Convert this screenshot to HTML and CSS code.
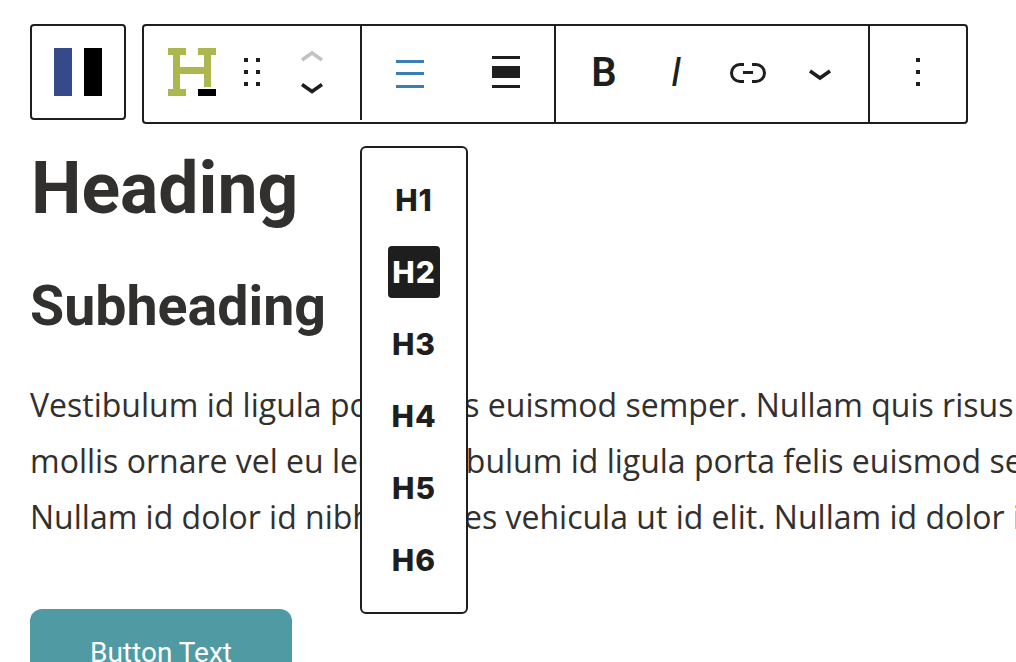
FILE: index.html
```html
<!DOCTYPE html>
<html lang="en">
<head>
<meta charset="utf-8">
<title>Heading block toolbar</title>
<link rel="stylesheet" href="styles.css">
</head>
<body>
<div class="toolbar-row">
  <div class="logo-box">
    <svg class="icon" viewBox="0 0 48 48"><rect x="0" y="0" width="18" height="48" fill="#364a89"/><rect x="30" y="0" width="18" height="48" fill="#000"/></svg>
  </div>
  <div class="toolbar">
    <div class="group group-first">
      <svg class="icon" viewBox="0 0 48 48"><path fill="#adb74f" d="M0 0h18v7h-6v12h24V7h-6V0h18v7h-5v32h-7V26H12v15h6v7H0v-7h5V7H0z"/><rect x="30" y="41" width="18" height="7" fill="#000"/></svg>
      <svg class="icon" viewBox="0 0 48 48"><path fill="#1e1e1e" d="M16 10h4v4h-4zM28 10h4v4h-4zM16 22h4v4h-4zM28 22h4v4h-4zM16 34h4v4h-4zM28 34h4v4h-4z"/></svg>
      <svg class="icon" viewBox="0 0 48 48"><path d="M14 12 24 5l10 7" fill="none" stroke="#c2c2c2" stroke-width="3.500"/><path d="M14 36.500 24 43.500l10-7" fill="none" stroke="#1e1e1e" stroke-width="3.500"/></svg>
    </div>
    <div class="group group-wide">
      <span class="slot"><svg class="icon" viewBox="0 0 48 48"><path fill="#3a7db8" d="M10 12h28v3H10zM10 24h28v3H10zM10 37h28v3H10z"/></svg></span>
      <span class="slot"><svg class="icon" viewBox="0 0 48 48"><path fill="#1e1e1e" d="M10 8h28v3H10zM10 18h28v12H10zM10 37h28v3H10z"/></svg></span>
    </div>
    <div class="group group-format">
      <span class="slot-sm glyph glyph-bold">B</span>
      <span class="slot-sm glyph glyph-italic">I</span>
      <span class="slot-sm"><svg class="icon" viewBox="0 0 48 48"><path d="M20 16.500h-4a8.500 8.500 0 0 0 0 17h4M28 16.500h4a8.500 8.500 0 0 1 0 17h-4M19 24.500h10" fill="none" stroke="#1e1e1e" stroke-width="3"/></svg></span>
      <span class="slot-sm"><svg class="icon" viewBox="0 0 48 48"><path d="M14 23 24 30l10-7" fill="none" stroke="#1e1e1e" stroke-width="3.500"/></svg></span>
    </div>
    <div class="group group-last">
      <svg class="icon" viewBox="0 0 48 48"><path fill="#1e1e1e" d="M22 10h4v4h-4zM22 22h4v4h-4zM22 34h4v4h-4z"/></svg>
    </div>
  </div>
</div>
<main class="content">
  <h1 class="title">Heading</h1>
  <h2 class="subtitle">Subheading</h2>
  <p class="copy">Vestibulum id ligula porta felis euismod semper. Nullam quis risus eget urna<br>mollis ornare vel eu leo. Vestibulum id ligula porta felis euismod semper.<br>Nullam id dolor id nibh ultricies vehicula ut id elit. Nullam id dolor id nibh</p>
  <a class="button">Button Text</a>
</main>
<ul class="menu">
  <li class="menu-item">H1</li>
  <li class="menu-item is-active">H2</li>
  <li class="menu-item">H3</li>
  <li class="menu-item">H4</li>
  <li class="menu-item">H5</li>
  <li class="menu-item">H6</li>
</ul>
</body>
</html>
```
FILE: styles.css
```css
html, body { margin: 0; padding: 0; height: 100%; overflow: hidden; background: #fff; }
body { position: relative; font-family: "Roboto", sans-serif; color: #1e1e1e; }
.toolbar-row { display: flex; align-items: flex-start; gap: 16px; padding: 24px 0 0 30px; }
.icon { display: block; width: 48px; height: 48px; flex: none; }
.logo-box { box-sizing: border-box; width: 96px; height: 96px; border: 2px solid #1e1e1e; border-radius: 4px; padding: 22px 22px; }
.toolbar { box-sizing: border-box; width: 826px; height: 100px; border: 2px solid #1e1e1e; border-radius: 4px; display: flex; }
.group { box-sizing: border-box; display: flex; align-items: flex-start; padding-top: 22px; border-right: 2px solid #1e1e1e; }
.group-first { width: 218px; height: 94px; padding-left: 24px; gap: 12px; }
.group-wide { width: 194px; }
.group-format { width: 314px; padding-left: 12px; }
.group-last { width: 96px; border-right: 0; justify-content: center; }
.slot { width: 96px; display: flex; justify-content: center; }
.slot-sm { width: 72px; height: 48px; display: flex; justify-content: center; align-items: center; }
.glyph { box-sizing: border-box; padding-top: 2px; font-size: 40px; line-height: 46px; }
.glyph-bold { font-weight: 600; }
.glyph-italic { font-style: italic; font-weight: 400; }
.content { padding-left: 30px; }
.title { margin: 23px 0 0 1px; font-size: 71.5px; line-height: 84px; font-weight: 700; color: #32302e; }
.subtitle { margin: 44px 0 0; font-size: 55.5px; line-height: 64px; font-weight: 700; color: #32302e; }
.copy { margin: 38px 0 0; font-family: "Open Sans", sans-serif; font-size: 32px; line-height: 56px; color: #32302e; white-space: nowrap; }
.button { display: block; box-sizing: border-box; width: 262px; height: 90px; margin-top: 64px; background: #4f9aa3; color: #fff; border-radius: 12px; text-align: center; font-size: 28px; line-height: 88px; }
.menu { position: absolute; left: 360px; top: 146px; box-sizing: border-box; width: 108px; height: 468px; margin: 0; padding: 26px 0; list-style: none; display: flex; flex-direction: column; align-items: center; gap: 20px; background: #fff; border: 2px solid #1e1e1e; border-radius: 6px; }
.menu-item { width: 52px; height: 52px; border-radius: 4px; font-family: "Inter", sans-serif; font-weight: 800; font-size: 30px; letter-spacing: 1px; line-height: 52px; text-align: center; color: #1e1e1e; }
.is-active { background: #1e1e1e; color: #fff; }
```
